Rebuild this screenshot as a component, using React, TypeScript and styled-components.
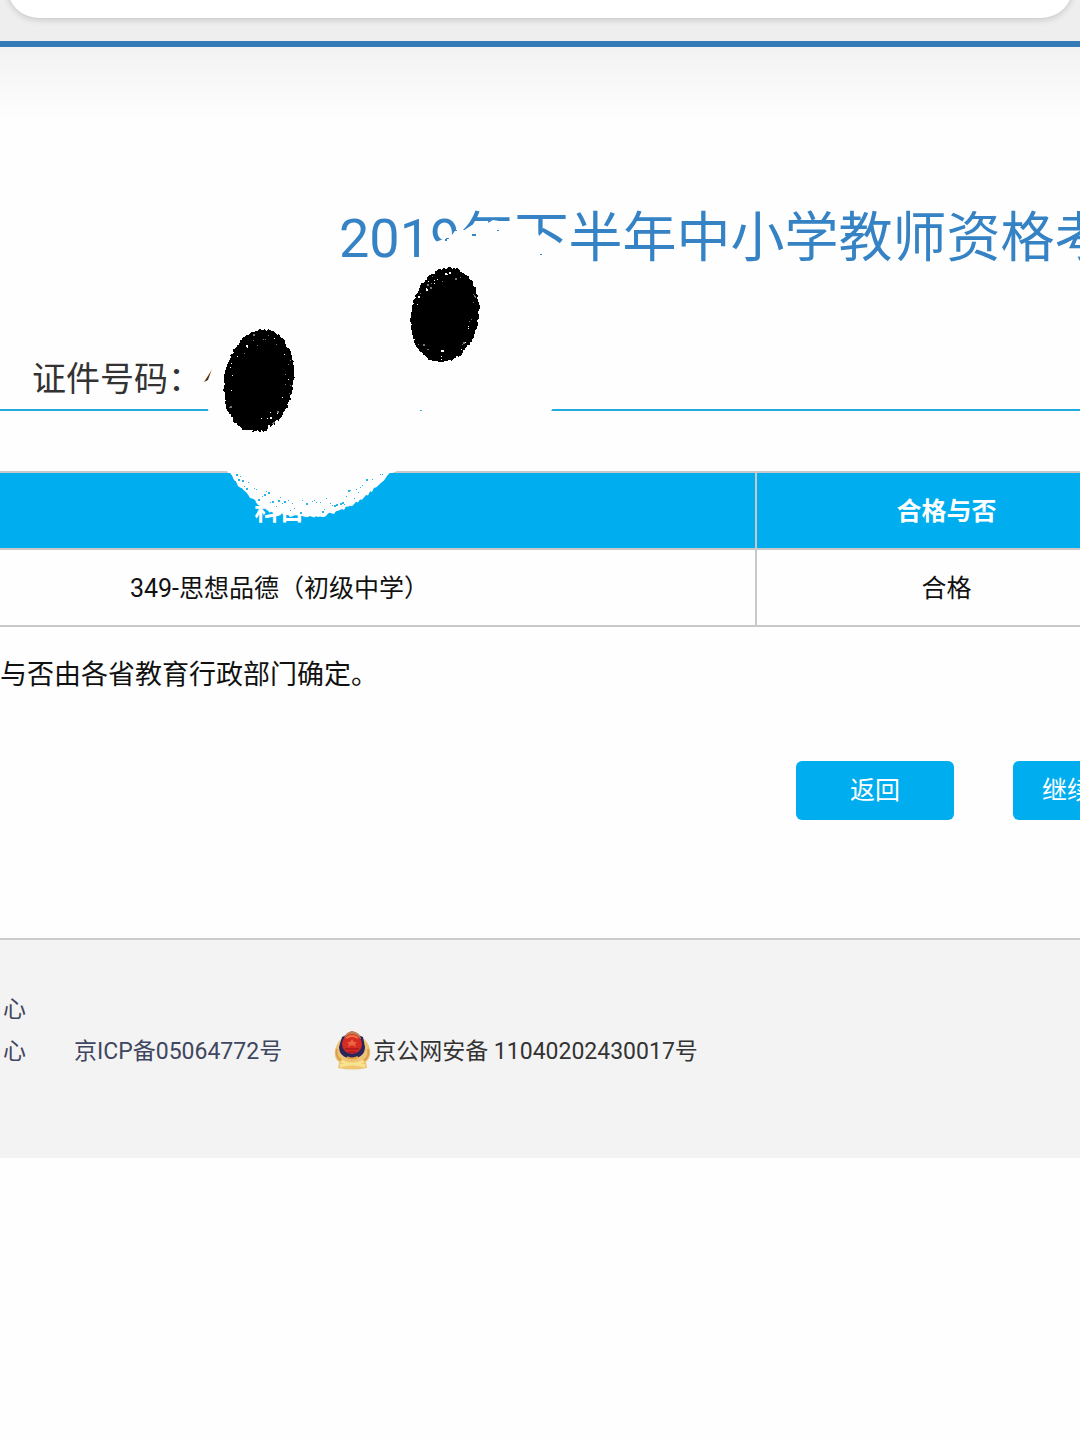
import React from "react";
import styled, { createGlobalStyle } from "styled-components";

const GlobalStyle = createGlobalStyle`
  *, *::before, *::after { box-sizing: border-box; }
  body {
    margin: 0;
    background: #fefefe;
    color: #111;
    font-family: Roboto, "Noto Sans CJK SC", sans-serif;
    font-size: 25px;
  }
  h1, p { margin: 0; font-weight: 400; }
`;

const Page = styled.div`
  position: relative;
  overflow: hidden;
  white-space: nowrap;
`;

const BrowserBar = styled.div`
  height: 41px;
  padding: 0 7px;
  overflow: hidden;
  background: #eee;
`;

const AddressPill = styled.div`
  height: 64px;
  margin-top: -46px;
  border-radius: 32px;
  background: #fff;
  box-shadow: 0 2px 6px rgba(0, 0, 0, 0.16);
`;

const Main = styled.main`
  border-top: 6px solid #347ab7;
  padding-top: 152px;
  background: linear-gradient(#f2f2f2, #fefefe 72px);
`;

const Title = styled.h1`
  padding-left: 339px;
  color: #3583c4;
  font-size: 54px;
  line-height: 80px;
`;

const IdRow = styled.p`
  margin-top: 70px;
  padding-left: 32px;
  border-bottom: 2px solid #1fade0;
  color: #333;
  font-size: 34px;
  line-height: 60px;
`;

const ResultFrame = styled.div`
  margin: 60px -58px 0 -198px;
`;

const ResultTable = styled.table`
  width: 100%;
  table-layout: fixed;
  border-collapse: collapse;
  color: #111;
  font: inherit;
  text-align: center;
  th, td {
    height: 77px;
    padding: 0 0 4px;
    border: 2px solid #c8c8c8;
  }
  th {
    background: #00adef;
    color: #fff;
    font-weight: 700;
  }
  th:last-child { width: 381px; }
`;

const Note = styled.p`
  margin-top: 28px;
  color: #111;
  font-size: 27px;
  line-height: 40px;
`;

const Actions = styled.div`
  display: flex;
  justify-content: flex-end;
  gap: 59px;
  margin: 66px -91px 118px 0;
`;

const ActionButton = styled.button`
  min-width: 158px;
  height: 59px;
  padding: 0 28px 5px;
  border: 0;
  border-radius: 6px;
  background: #00adef;
  color: #fff;
  font: inherit;
`;

const Footer = styled.footer`
  height: 220px;
  padding: 49px 3px;
  border-top: 2px solid #ccc;
  background: #f3f3f3;
  color: #3f4660;
  font-size: 23px;
  line-height: 42px;
`;

const FooterLine = styled.div`
  display: flex;
  height: 42px;
  gap: 48px;
  align-items: center;
`;

const FooterLink = styled.a`
  display: flex;
  align-items: center;
  gap: 2px;
  margin-right: 4px;
  color: ${(p: { $plain?: boolean }) => (p.$plain ? "#333" : "#3f4660")};
  text-decoration: none;
  svg { margin-bottom: 4px; }
`;

const ScribbleLayer = styled.svg`
  position: absolute;
  top: 0;
  left: 0;
  pointer-events: none;
`;

function makeRandom(seed: number) {
  let s = seed;
  return () => {
    s = (s * 16807) % 2147483647;
    return s / 2147483647;
  };
}

type Oval = { cx: number; cy: number; rx: number; ry: number; tilt: number; seed: number };

function Smudge({ cx, cy, rx, ry, tilt, seed }: Oval) {
  const rand = makeRandom(seed);
  const edge: string[] = [];
  for (let i = 0; i < 150; i++) {
    const a = (i / 150) * Math.PI * 2;
    const k = 0.96 + rand() * 0.06;
    edge.push(`${(Math.cos(a) * rx * k).toFixed(1)},${(Math.sin(a) * ry * k).toFixed(1)}`);
  }
  const specks = Array.from({ length: 36 }, () => {
    const a = rand() * Math.PI * 2;
    const k = 0.72 + rand() * 0.24;
    return { x: Math.cos(a) * rx * k, y: Math.sin(a) * ry * k, s: rand() > 0.7 ? 2 : 1 };
  });
  return (
    <g transform={`translate(${cx} ${cy}) rotate(${tilt})`} shapeRendering="crispEdges">
      <polygon points={edge.join(" ")} fill="#000" />
      {specks.map((p, i) => (
        <rect key={i} x={p.x} y={p.y} width={p.s} height={p.s} fill={i % 2 ? "#fff" : "#777"} />
      ))}
    </g>
  );
}

function Scribble() {
  const rand = makeRandom(77);
  const chin: string[] = [];
  const flecks: { x: number; y: number; s: number }[] = [];
  for (let x = 228; x <= 392; x += 2) {
    const drop = x < 307 ? Math.pow((307 - x) / 79, 2.6) : Math.pow((x - 307) / 85, 2.1);
    const y = 471 + 46 * (1 - drop);
    chin.push(`${x},${(y + rand() * 3 - 1.5).toFixed(1)}`);
    if (rand() > 0.4 && y > 480) {
      flecks.push({ x, y: Math.max(474, y - 4 - rand() * 14), s: rand() > 0.6 ? 2 : 1 });
    }
  }
  return (
    <ScribbleLayer width="600" height="560" viewBox="0 0 600 560" aria-hidden="true">
      <path
        d="M213 366 L208 380 L202 383 L199 396 L208 408 L210 430 L228 473 L392 473 L440 455 L500 435 L551 411 L575 380 L578 300 L566 266 L565 250 L557 243 L546 235 L543 232 L539 236 L534 222 L520 229 L505 222 L493 220 L488 223 L480 222 L472 225 L463 231 L457 228 L452 235 L441 240 L432 243 L428 262 L400 280 L300 310 L240 340 Z"
        fill="#fefefe"
      />
      <polygon points={`228,468 ${chin.join(" ")} 392,468`} fill="#fefefe" />
      <g fill="#29b4e9" shapeRendering="crispEdges">
        {flecks.map((p, i) => (
          <rect key={i} x={p.x} y={p.y} width={p.s} height={p.s} />
        ))}
        <rect x="420" y="410" width="2" height="1" />
      </g>
      <g fill="#3583c4" shapeRendering="crispEdges">
        <rect x="445" y="239" width="2" height="2" />
        <rect x="454" y="230" width="3" height="1" />
        <rect x="472" y="234" width="4" height="2" />
        <rect x="497" y="230" width="2" height="1" />
        <rect x="446" y="238" width="3" height="1" />
        <rect x="540" y="254" width="2" height="1" />
      </g>
      <Smudge cx={259} cy={381} rx={35} ry={52} tilt={9} seed={211} />
      <Smudge cx={445} cy={315} rx={34} ry={48} tilt={10} seed={431} />
    </ScribbleLayer>
  );
}

function PoliceBadge() {
  return (
    <svg width="37" height="40" viewBox="0 0 37 40" aria-hidden="true">
      <path d="M7 9 C-1 17 -1 28 5 32 L4 38 Q18 41 33 38 L32 32 C38 27 38 16 30 9 Z" fill="#edc575" />
      <path d="M3 19 Q1 27 8 31 M34 19 Q36 27 29 31" stroke="#d99d51" strokeWidth="2" fill="none" />
      <path d="M7 31 Q18 37 30 31 M6 36 Q18 32 31 36" stroke="#f9e28d" strokeWidth="3" fill="none" />
      <path d="M18 1 L22 4 L29 7 L31 17 Q31 27 18 29 Q5 27 5 17 L8 7 L14 4 Z" fill="#29265b" />
      <path d="M10 9 Q11 2 18 1 Q26 2 27 9 Z" fill="#bd8057" />
      <circle cx="18" cy="14" r="10" fill="#d72c23" />
      <path d="M12 8 Q18 4 24 8" stroke="#f27442" strokeWidth="2" fill="none" />
      <path d="M18 9 L20 12 H23 L21 14 L22 17 L18 15 L14 17 L15 14 L13 12 H16 Z" fill="#ee6541" />
      <path d="M11 19 H25 M14 22 H22" stroke="#b51d22" strokeWidth="2" />
      <path d="M13 27 Q18 30 24 27" stroke="#e9a344" strokeWidth="2" fill="none" />
    </svg>
  );
}

export default function App() {
  return (
    <Page lang="zh-CN">
      <GlobalStyle />
      <BrowserBar>
        <AddressPill />
      </BrowserBar>
      <Main>
        <Title>2019年下半年中小学教师资格考</Title>
        <IdRow>证件号码：4</IdRow>
        <ResultFrame>
          <ResultTable>
            <thead>
              <tr>
                <th scope="col">科目</th>
                <th scope="col">合格与否</th>
              </tr>
            </thead>
            <tbody>
              <tr>
                <td>349-思想品德（初级中学）</td>
                <td>合格</td>
              </tr>
            </tbody>
          </ResultTable>
        </ResultFrame>
        <Note>与否由各省教育行政部门确定。</Note>
        <Actions>
          <ActionButton type="button">返回</ActionButton>
          <ActionButton type="button">继续查询</ActionButton>
        </Actions>
      </Main>
      <Footer>
        <FooterLine>心</FooterLine>
        <FooterLine>
          <span>心</span>
          <FooterLink href="#icp">京ICP备05064772号</FooterLink>
          <FooterLink href="#police" $plain>
            <PoliceBadge />
            京公网安备 11040202430017号
          </FooterLink>
        </FooterLine>
      </Footer>
      <Scribble />
    </Page>
  );
}
